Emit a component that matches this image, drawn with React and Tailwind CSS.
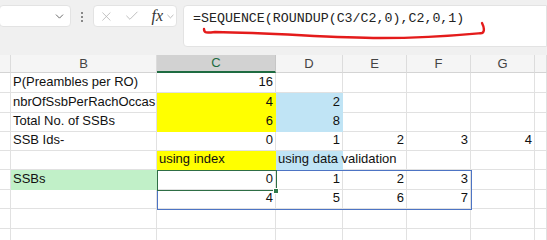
import { X, Check, ChevronDown } from 'lucide-react';

const colWidths = [11, 146, 119, 67, 64, 64, 64, 12];
const letters = ['', 'B', 'C', 'D', 'E', 'F', 'G', ''];

const YEL = 'bg-[#ffff00] border-[#ffff00]';
const BLU = 'bg-[#c0e4f5] border-[#c0e4f5]';
const GRN = 'bg-[#c1f0c8] border-[#c1f0c8]';

// each row: height + cells keyed by column index
const rows = [
  { h: 20, cells: { 1: { t: 'P(Preambles per RO)' }, 2: { t: '16', r: true } } },
  { h: 20, cells: { 1: { t: 'nbrOfSsbPerRachOccas' }, 2: { t: '4', r: true, fill: YEL }, 3: { t: '2', r: true, fill: BLU } } },
  { h: 19, cells: { 1: { t: 'Total No. of SSBs' }, 2: { t: '6', r: true, fill: YEL }, 3: { t: '8', r: true, fill: BLU } } },
  { h: 19, cells: { 1: { t: 'SSB Ids-' }, 2: { t: '0', r: true }, 3: { t: '1', r: true }, 4: { t: '2', r: true }, 5: { t: '3', r: true }, 6: { t: '4', r: true } } },
  { h: 19, cells: { 2: { t: 'using index', fill: YEL }, 3: { t: 'using data validation', fill: BLU, spill: true } } },
  { h: 20, cells: { 1: { t: 'SSBs', fill: GRN }, 2: { t: '0', r: true }, 3: { t: '1', r: true }, 4: { t: '2', r: true }, 5: { t: '3', r: true } } },
  { h: 19, cells: { 2: { t: '4', r: true }, 3: { t: '5', r: true }, 4: { t: '6', r: true }, 5: { t: '7', r: true } } },
  { h: 20, cells: {} },
  { h: 20, cells: {} },
];

function Cell({ w, h, cell }) {
  const fill = cell?.fill || 'bg-white border-[#e1e1e1]';
  return (
    <div
      className={`shrink-0 border-r border-b flex items-end pb-[1px] whitespace-nowrap ${fill} ${cell?.spill ? 'relative z-10 overflow-visible' : 'overflow-hidden'} ${cell?.r ? 'justify-end pr-[2px]' : 'pl-[2px]'}`}
      style={{ width: w, height: h }}
    >
      {cell?.t}
    </div>
  );
}

export default function App() {
  return (
    <div className="w-[547px] h-[240px] overflow-hidden bg-[#f0f0f0] relative" style={{ fontFamily: '"Liberation Sans", Arial, sans-serif' }}>
      {/* formula bar */}
      <div className="h-[55px] flex items-start pt-[5px]">
        <div className="w-[72px] h-[22px] -ml-[1px] bg-white border border-[#e3e3e3] rounded-[4px] flex items-center justify-end pr-[4px] text-[#555]">
          <ChevronDown size={13} strokeWidth={1.6} />
        </div>
        <div className="flex flex-col gap-[2px] pt-[7px] w-[4px] ml-[9px] items-center">
          <span className="w-[2px] h-[2px] bg-[#666] rounded-full" />
          <span className="w-[2px] h-[2px] bg-[#666] rounded-full" />
          <span className="w-[2px] h-[2px] bg-[#666] rounded-full" />
        </div>
        <div className="w-[84px] h-[22px] ml-[9px] bg-white border border-[#e3e3e3] rounded-[4px] flex items-center pl-[5px] gap-[6px] text-[#b4b4b4]">
          <X size={15} strokeWidth={1.3} />
          <Check size={16} strokeWidth={1.3} className="ml-[4px]" />
          <span className="ml-[6px] text-[#333] text-[16px] italic leading-none" style={{ fontFamily: '"Liberation Serif", serif' }}>fx</span>
          <ChevronDown size={11} strokeWidth={1.5} className="-ml-[4px] text-[#999]" />
        </div>
        <div className="flex-1 h-[42px] ml-[6px] bg-white border border-[#e3e3e3] rounded-l-[4px] pl-[9px] pt-[3px] text-[13.3px] text-[#222]" style={{ fontFamily: '"Liberation Mono", monospace' }}>
          =SEQUENCE(ROUNDUP(C3/C2,0),C2,0,1)
        </div>
      </div>

      {/* red hand-drawn underline */}
      <svg className="absolute left-0 top-0 pointer-events-none" width="547" height="60">
        <path d="M204 29 C204 33 206 33 215 32 C280 33 330 38 380 38 C430 38 460 35 482 33 C485 32 484 27 482 23" fill="none" stroke="#e41b1b" strokeWidth="2.4" strokeLinecap="round" />
      </svg>

      {/* column headers */}
      <div className="flex h-[18px] text-[13px] text-[#444]">
        {colWidths.map((w, i) => (
          <div
            key={i}
            className={`shrink-0 flex items-center justify-center border-r ${i === 2 ? 'bg-[#d2d2d2] border-[#c6c6c6] border-b-2 border-b-[#1e6b41] text-[#1e6b41]' : 'bg-[#f5f5f5] border-[#dcdcdc] border-b border-b-[#d4d4d4]'}`}
            style={{ width: w }}
          >
            {letters[i]}
          </div>
        ))}
      </div>

      {/* grid */}
      <div className="relative text-[13px] text-[#111]">
        {rows.map((row, ri) => (
          <div key={ri} className="flex">
            {colWidths.map((w, ci) => (
              <Cell key={ci} w={w} h={row.h} cell={row.cells[ci]} />
            ))}
          </div>
        ))}
        {/* spill range + active cell */}
        <div className="absolute left-[157px] top-[97px] w-[315px] h-[40px] border border-[#4d74c4] z-20 pointer-events-none" />
        <div className="absolute left-[157px] top-[97px] w-[120px] h-[21px] border-[1.5px] border-[#2e6e45] z-30 pointer-events-none" />
        <div className="absolute left-[273px] top-[115px] w-[6px] h-[6px] bg-[#2e7a4a] border border-white z-30" />
      </div>
    </div>
  );
}
